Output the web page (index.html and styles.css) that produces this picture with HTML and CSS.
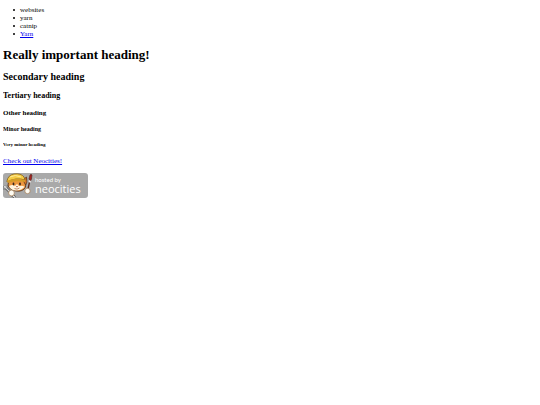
FILE: index.html
```html
<!DOCTYPE html>
<html lang="en">
<head>
<meta charset="utf-8">
<title>Websites</title>
<link rel="stylesheet" href="styles.css">
</head>
<body>
<ul>
<li>websites</li>
<li>yarn</li>
<li>catnip</li>
<li><a href="#yarn">Yarn</a></li>
</ul>
<h1>Really important heading!</h1>
<h2>Secondary heading</h2>
<h3>Tertiary heading</h3>
<h4>Other heading</h4>
<h5>Minor heading</h5>
<h6>Very minor heading</h6>
<p><a href="#neocities">Check out Neocities!</a></p>
<a class="badge" href="#hosted">
<svg class="cat" viewBox="0 0 31 25" aria-hidden="true">
<path d="M1 13L3 15L7 19M3 12L3 15L0 15" fill="none" stroke="#444" stroke-width="2.600"/>
<path d="M1 13L3 15L7 19M3 12L3 15L0 15" fill="none" stroke="#d8d8d8" stroke-width="1.200"/>
<path d="M6 7L5 12Q6 17 13 18Q20 19 22.500 14L23.500 5L20 6Z" fill="#ee9840" stroke="#5b351c" stroke-width=".9"/>
<path d="M20 7L23.500 4L24 9L22.500 12Z" fill="#d77628" stroke="#55351d" stroke-width=".7"/>
<path d="M6 13Q10 11 12 13L14 11L16 13Q20 12 21.500 14Q18 17.500 13 17.500Q8 17.500 6 13Z" fill="#fff4df"/>
<path d="M4 8Q5 2 11 1Q18 0 21 4L22 7Q13 4 4 9Z" fill="#f4cc45" stroke="#806021" stroke-width=".8"/>
<path d="M4 8Q12 4 22 7L22 9Q13 7 5 10Z" fill="#d59c28"/>
<path d="M7 4Q12 1 18 4" fill="none" stroke="#ffe995"/>
<ellipse cx="10.500" cy="11" rx=".9" ry="1.400" fill="#32251e"/>
<ellipse cx="17" cy="11" rx=".9" ry="1.400" fill="#32251e"/>
<path d="M13 13H15L14 14.500Z" fill="#a34734"/>
<path d="M11.500 15.500Q14 17 16.500 15" fill="none" stroke="#a95d38" stroke-width=".7"/>
<path d="M9 22L12 24.500" stroke="#444" stroke-width="2.600"/>
<path d="M9 22L12 24.500" stroke="#eee" stroke-width="1.300"/>
<circle cx="8.500" cy="20" r="2.900" fill="#fffdf4" stroke="#a07850" stroke-width=".7"/>
<path d="M27 7L24.500 18" stroke="#5a2a1c" stroke-width="1.300"/>
<path d="M26 6L27 2Q28 .5 29 2L28.500 6L27.500 8Z" fill="#a82320" stroke="#4e2520" stroke-width=".6"/>
<path d="M26 7L28 8L27.300 10L25.800 9Z" fill="#eee"/>
<circle cx="24.500" cy="18" r="2.700" fill="#fffdf4" stroke="#a07850" stroke-width=".7"/>
</svg>
<span class="words"><span class="hosted">hosted by</span><span class="brand">neocities</span></span>
</a>
</body>
</html>
```

FILE: styles.css
```css
body {
  margin: 6px 3px;
  background: #fff;
  color: #000;
  font: 7px/8px "Liberation Serif", serif;
}

ul {
  margin: 0 0 9px;
  padding-left: 10px;
  list-style: none;
}

li {
  display: flex;
  align-items: center;
  gap: 5px;
}

li::before {
  width: 2px;
  height: 2px;
  border-radius: 50%;
  background: #000;
  content: "";
}

a {
  color: #00e;
}

h1, h2, h3, h4, h5, h6, p {
  margin: 0 0 8px;
}

h1 {
  font-size: 13px;
  line-height: 16px;
}

h2 {
  font-size: 10px;
  line-height: 12px;
}

h3 {
  font-size: 8px;
  line-height: 10px;
}

h4 {
  font-size: 7px;
}

h5 {
  font-size: 6px;
}

h6 {
  font-size: 5px;
}

.badge {
  display: flex;
  width: fit-content;
  height: 25px;
  border-radius: 3px;
  background: #a9a9a9;
  color: #fff;
  font-family: "Open Sans", sans-serif;
  text-decoration: none;
}

.cat {
  width: 31px;
  height: 25px;
}

.words {
  display: flex;
  flex-direction: column;
  padding: 4px 7px 0 1px;
}

.hosted {
  font-family: Lato, sans-serif;
  font-size: 6px;
  line-height: 6px;
}

.brand {
  font-size: 11px;
  line-height: 11px;
}
```
